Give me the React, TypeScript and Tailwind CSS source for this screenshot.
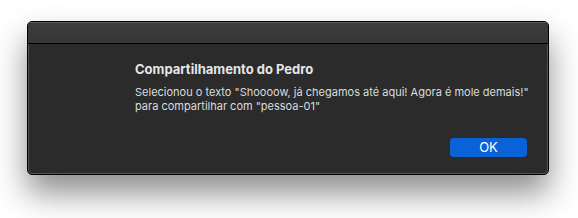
export default function App() {
  return (
    <div className="w-[578px] h-[218px] bg-white pt-[21px] pl-[27px] font-['Inter',sans-serif]">
      <div className="w-[522px] h-[154px] rounded-[5px] border border-black bg-[#2b2b2b] shadow-[0_18px_32px_rgba(0,0,0,0.45)] overflow-hidden flex flex-col">
        <div className="h-[22px] shrink-0 bg-gradient-to-b from-[#3d3d3d] to-[#363636] border-t border-[#5a5a5a] border-b border-b-black" />
        <div className="flex-1 flex flex-col pl-[106px] pr-[20px] pt-[17px] border-x border-b border-[#555] rounded-b-[4px]">
          <h1 className="text-[13px] leading-[16px] font-bold text-[#e6e6e6] whitespace-nowrap">Compartilhamento do Pedro</h1>
          <p className="mt-[8px] text-[11px] leading-[14px] text-[#dcdcdc] whitespace-nowrap">
            Selecionou o texto "Shoooow, já chegamos até aqui! Agora é mole demais!"
            <br />
            para compartilhar com "pessoa-01"
          </p>
          <div className="flex justify-end mt-[25px]">
            <button className="w-[77px] h-[19px] rounded-[4px] bg-[#0a63d6] text-[13px] leading-[19px] text-white">
              OK
            </button>
          </div>
        </div>
      </div>
    </div>
  )
}
